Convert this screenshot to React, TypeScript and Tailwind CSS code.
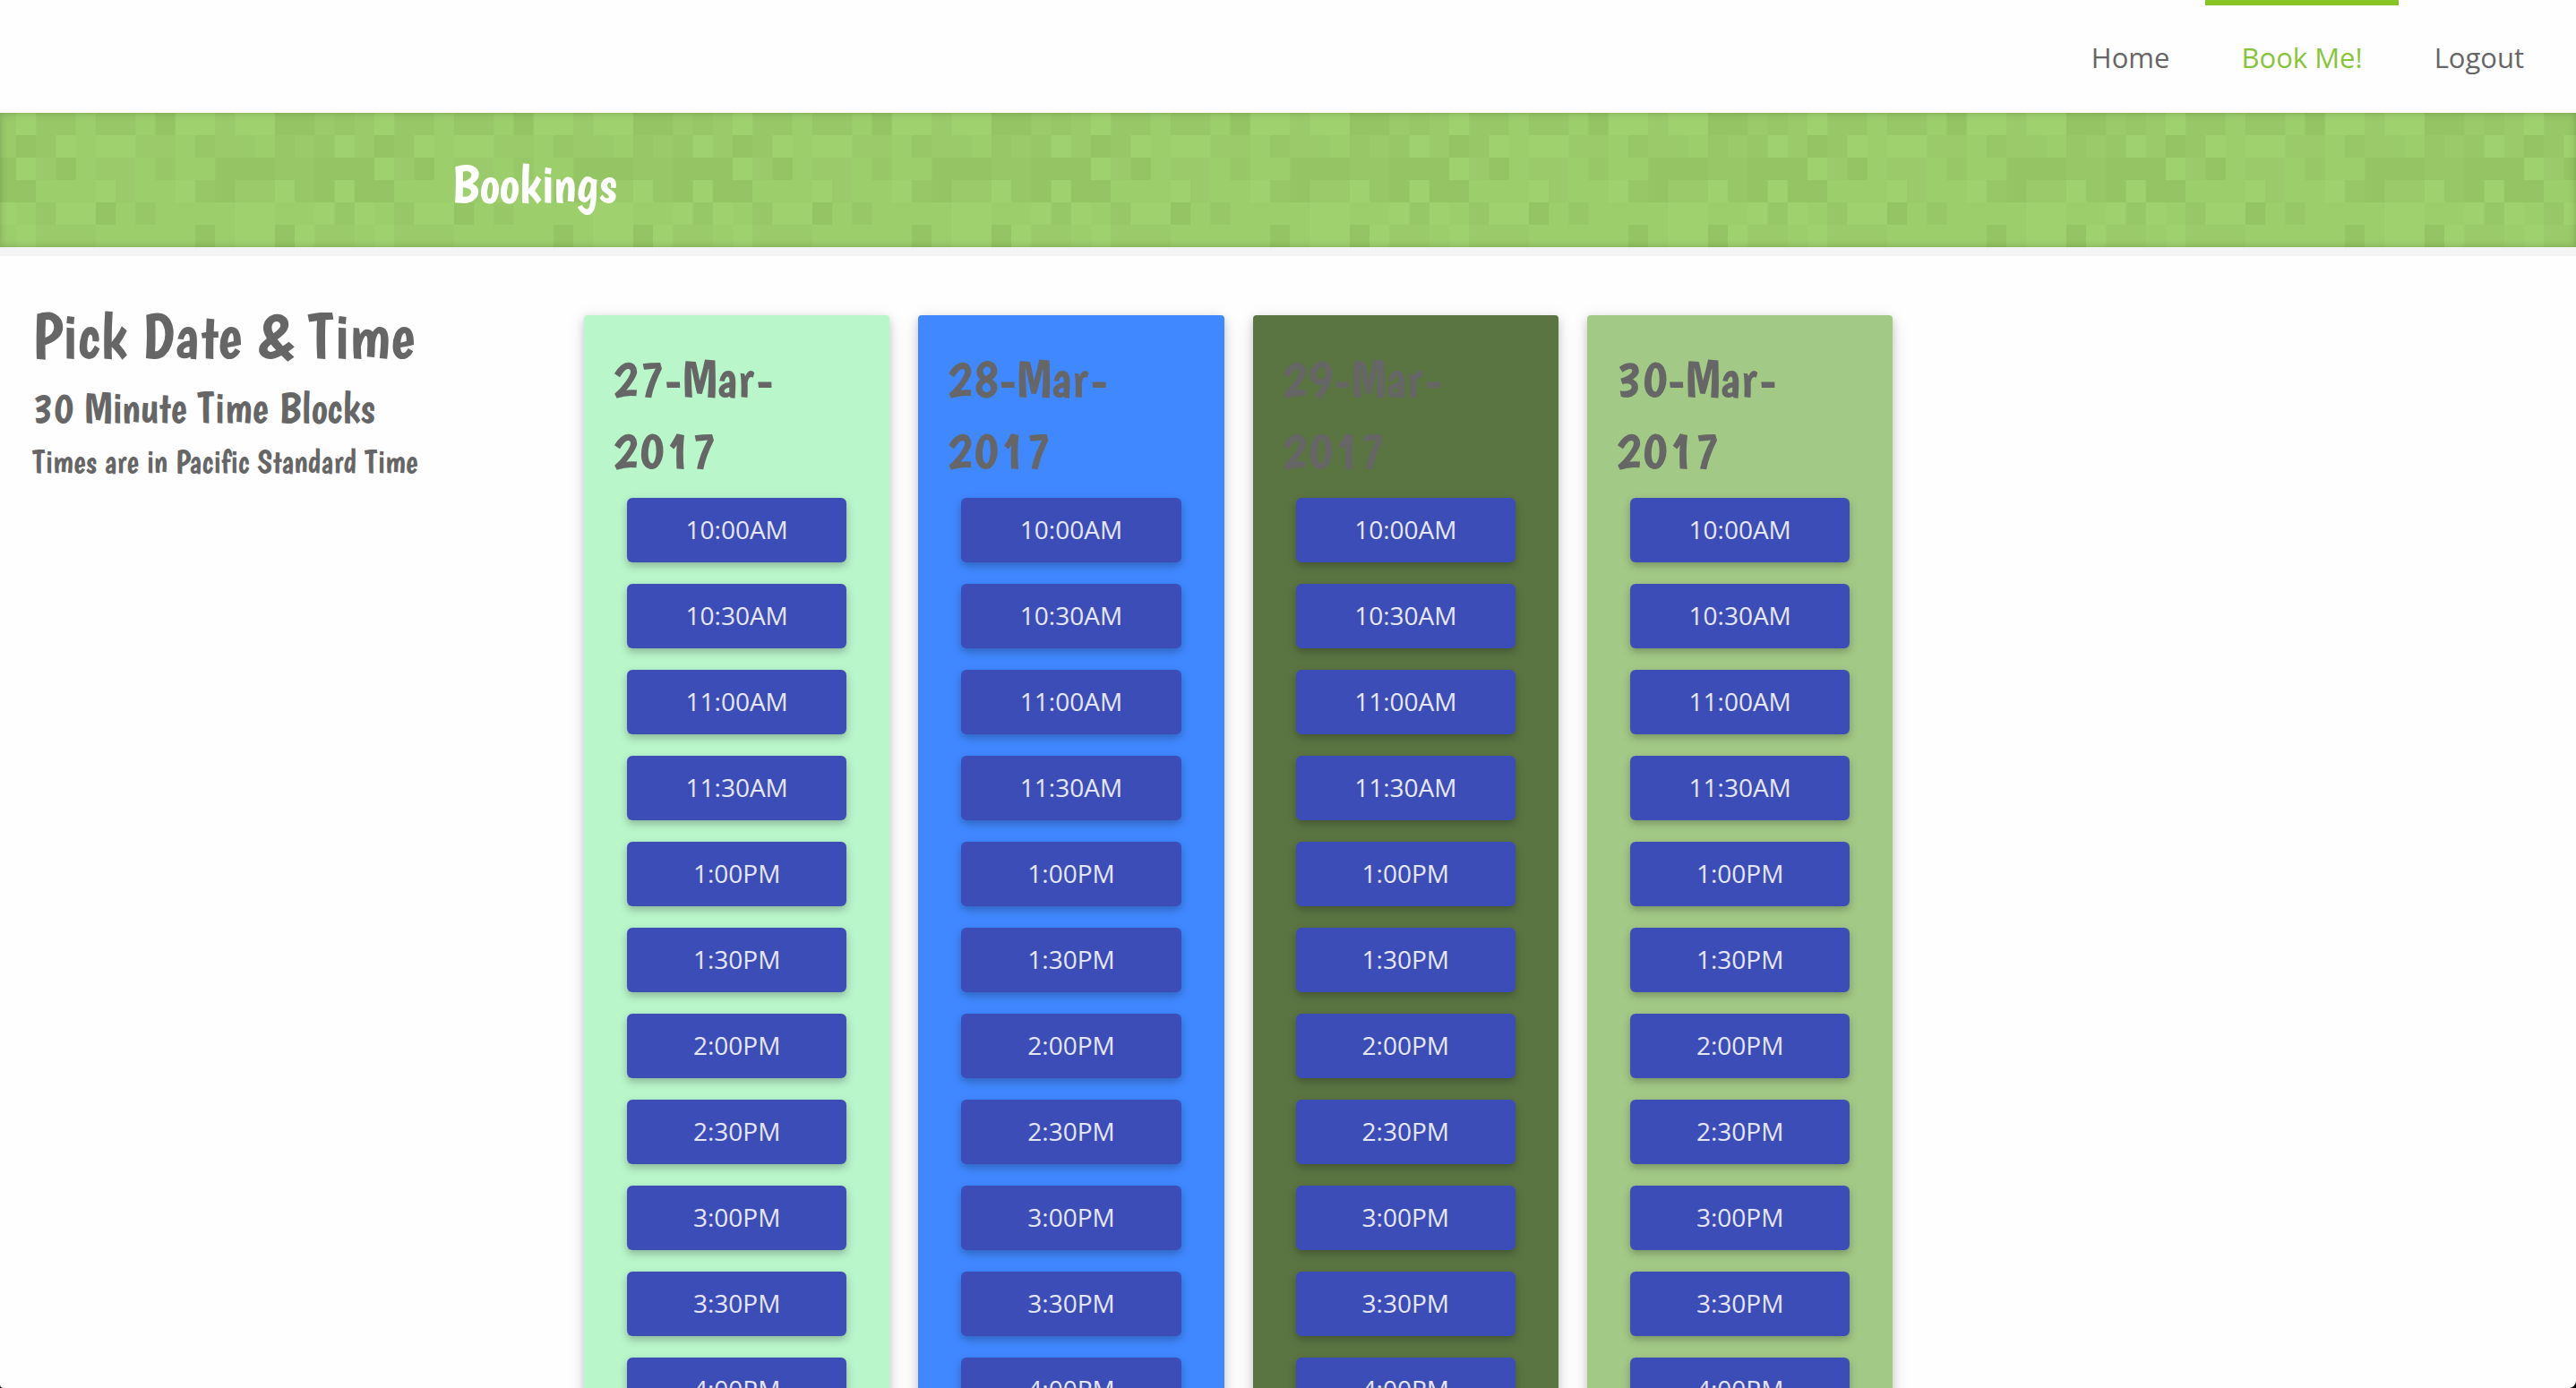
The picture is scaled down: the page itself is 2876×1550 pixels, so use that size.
const navItems = [
  { label: 'Home', active: false },
  { label: 'Book Me!', active: true },
  { label: 'Logout', active: false },
];

const days = [
  { date: '27-Mar-2017', color: 'bg-[#b9f6ca]' },
  { date: '28-Mar-2017', color: 'bg-[#4088ff]' },
  { date: '29-Mar-2017', color: 'bg-[#5a7542]' },
  { date: '30-Mar-2017', color: 'bg-[#a3c986]' },
];

const times = [
  '10:00AM', '10:30AM', '11:00AM', '11:30AM', '1:00PM', '1:30PM',
  '2:00PM', '2:30PM', '3:00PM', '3:30PM', '4:00PM', '4:30PM',
];

// Shades of the mosaic squares, darkest first; each digit below picks one.
const shades = ['#94c463', '#97c767', '#9aca69', '#9dce6c', '#a0d16f'];
const mosaic = [
  '411311304424400212',
  '014344223122312142',
  '420322313300011000',
  '033342334102241040',
  '314403133334433414',
  '422233333034404223',
];

function MosaicBackground() {
  const cell = 400 / 18;
  return (
    <svg className="absolute inset-0 size-full" aria-hidden="true">
      <defs>
        <pattern id="mosaic" x="18" width="400" height="150" patternUnits="userSpaceOnUse">
          <rect width="400" height="150" fill={shades[3]} />
          {mosaic.map((row, y) =>
            row.split('').map((shade, x) => (
              <rect
                key={`${x}-${y}`}
                x={x * cell}
                y={y * 25}
                width={cell + 0.4}
                height="25"
                fill={shades[Number(shade)]}
              />
            )),
          )}
        </pattern>
      </defs>
      <rect width="100%" height="100%" fill="url(#mosaic)" />
    </svg>
  );
}

function DayCard({ date, color }: { date: string; color: string }) {
  return (
    <section className="px-4">
      <div
        className={`rounded px-8 pt-[30px] pb-8 shadow-[0_4px_10px_rgba(0,0,0,0.16),0_4px_20px_rgba(0,0,0,0.12)] ${color}`}
      >
        <h2 className="mb-[14px] font-[Boogaloo,cursive] text-[60px] leading-[80px]">{date}</h2>
        <ul className="flex flex-col gap-6 px-4">
          {times.map((time) => (
            <li key={time}>
              <button
                type="button"
                className="h-[72px] w-full rounded-md bg-[#3d4db7] pb-0.5 text-[28px] text-[#e5e7f6] shadow-[0_4px_10px_rgba(0,0,0,0.26)]"
              >
                {time}
              </button>
            </li>
          ))}
        </ul>
      </div>
    </section>
  );
}

export default function App() {
  return (
    <div className="h-screen bg-black">
      <div className="h-full overflow-hidden rounded-br-lg rounded-bl bg-[#fefefe] font-['Open_Sans','Noto_Sans',sans-serif] text-[#666]">
        <header>
          <nav className="flex justify-end pr-[18px]">
            {navItems.map((item) => (
              <a
                key={item.label}
                href="#"
                className={
                  item.active
                    ? 'border-t-[6px] border-[#88c425] px-10 pt-[37px] pb-[41px] text-[31px] leading-[42px] text-[#88c43a]'
                    : 'border-t-[6px] border-transparent px-10 pt-[37px] pb-[41px] text-[31px] leading-[42px]'
                }
              >
                {item.label}
              </a>
            ))}
          </nav>
        </header>

        <div className="relative border-b-[10px] border-[#f5f4f5]">
          <MosaicBackground />
          <div className="relative pt-10 pb-8 pl-[504px] shadow-[inset_0_0_10px_rgba(0,0,0,0.2)]">
            <h1 className="font-[Boogaloo,cursive] text-[60px] leading-[78px] text-white">Bookings</h1>
          </div>
        </div>

        <main className="flex pt-[66px]">
          <aside className="w-[636px] shrink-0 pl-9 font-[Boogaloo,cursive]">
            <h2 className="mb-[18px] text-[72px] leading-[46px]">Pick Date &amp; Time</h2>
            <h3 className="text-[48px] leading-[80px]">30 Minute Time Blocks</h3>
            <h4 className="text-[36px] leading-[40px]">Times are in Pacific Standard Time</h4>
          </aside>
          <div className="grid flex-1 grid-cols-6">
            {days.map((day) => (
              <DayCard key={day.date} date={day.date} color={day.color} />
            ))}
          </div>
        </main>
      </div>
    </div>
  );
}
